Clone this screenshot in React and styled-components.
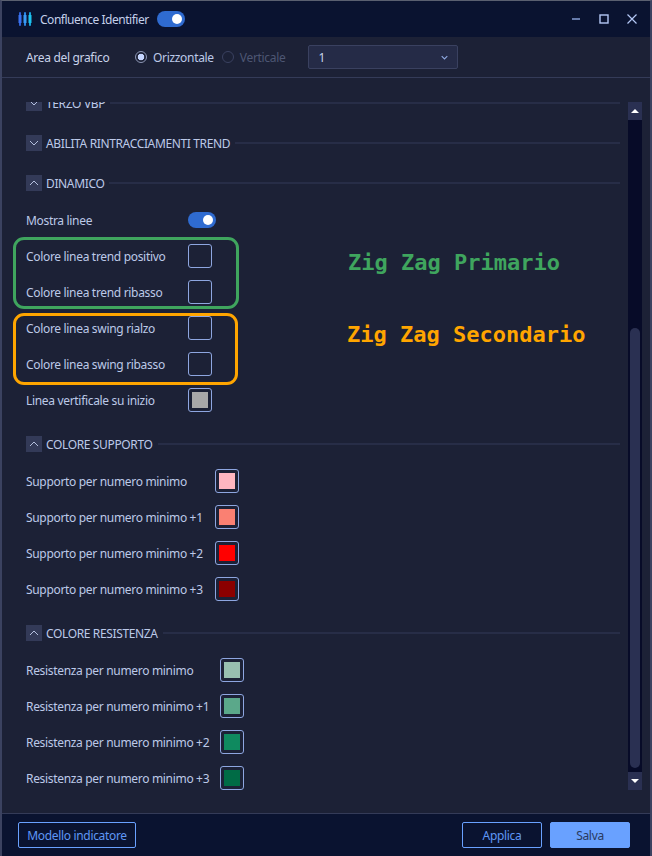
import styled, { createGlobalStyle } from "styled-components";

const GlobalStyle = createGlobalStyle`
  html, body {
    margin: 0;
    padding: 0;
    background: #1c2136;
  }
  *, *::before, *::after {
    box-sizing: border-box;
  }
`;

const Window = styled.div`
  width: 652px;
  height: 856px;
  display: flex;
  flex-direction: column;
  background: #1c2136;
  border-top: 1px solid #5a6070;
  border-left: 2px solid #3b4260;
  border-right: 2px solid #3b4260;
  font-family: "Noto Sans", "Open Sans", sans-serif;
  font-size: 12px;
  letter-spacing: -0.32px;
  color: #c9d3ea;
  overflow: hidden;
`;

const TitleBar = styled.div`
  height: 36px;
  flex: none;
  display: flex;
  align-items: center;
  background: #0a1330;
  padding: 0 12px 0 16px;
`;

const Title = styled.span`
  margin-left: 8px;
  margin-right: 8px;
  letter-spacing: -0.48px;
  color: #c4d0ea;
`;

const WindowControls = styled.div`
  margin-left: auto;
  display: flex;
  align-items: center;
  gap: 16px;
  color: #8fa8e0;
`;

const Toggle = styled.span`
  width: 28px;
  height: 16px;
  border-radius: 8px;
  background: #2f6bd0;
  display: flex;
  align-items: center;
  justify-content: flex-end;
  padding-right: 3px;

  &::after {
    content: "";
    width: 10px;
    height: 10px;
    border-radius: 50%;
    background: #fff;
  }
`;

const OptionsBar = styled.div`
  height: 41px;
  flex: none;
  display: flex;
  align-items: center;
  padding-left: 24px;
  background: #1c2136;
  border-bottom: 1px solid #343b58;
`;

const OptionLabel = styled.span`
  width: 109px;
`;

const Radio = styled.label`
  display: flex;
  align-items: center;
  gap: 6px;
  margin-right: 8px;
  color: ${(p) => (p.$disabled ? "#4d5673" : "#bcc9e8")};

  &::before {
    content: "";
    width: 12px;
    height: 12px;
    border-radius: 50%;
    border: 1px solid ${(p) => (p.$disabled ? "#3a4160" : "#8d97b5")};
    background: ${(p) =>
      p.$disabled
        ? "transparent"
        : "radial-gradient(circle, #c6d6ff 0 3px, transparent 3.6px)"};
  }
`;

const Select = styled.div`
  width: 150px;
  height: 24px;
  margin-left: 15px;
  display: flex;
  align-items: center;
  justify-content: space-between;
  padding: 0 9px;
  background: #252b47;
  border: 1px solid #3a4160;
  border-radius: 2px;
  color: #8fa8e0;

  span {
    color: #c9d3ea;
  }
`;

const Body = styled.div`
  flex: 1;
  min-height: 0;
  display: flex;
  padding: 24px 8px 23px 24px;
`;

/* the list is scrolled: the first heading is cut at the top edge */
const Content = styled.div`
  width: 594px;
  clip-path: inset(0 0 0 -24px);
`;

const Section = styled.div`
  margin-top: ${(p) => p.$top || 0}px;
`;

const Header = styled.div`
  height: 16px;
  display: flex;
  align-items: center;
  gap: 4px;
  margin-top: ${(p) => p.$top || 0}px;
  font-size: 12px;
  letter-spacing: -0.36px;
  color: #bcc9e8;

  &::after {
    content: "";
    flex: 1;
    height: 2px;
    margin-left: 1px;
    background: #272d47;
  }
`;

const Chevron = styled.span`
  width: 16px;
  height: 16px;
  flex: none;
  display: flex;
  align-items: center;
  justify-content: center;
  background: #333a58;
  color: #b4c0de;
`;

const Rows = styled.div`
  margin-top: 11px;
  position: relative;
`;

const Row = styled.div`
  height: 36px;
  display: grid;
  grid-template-columns: ${(p) => p.$label}px auto;
  justify-content: start;
  align-items: center;
  color: #bcc9e8;
`;

const Swatch = styled.span`
  width: 24px;
  height: 24px;
  display: flex;
  align-items: center;
  justify-content: center;
  background: transparent;
  border: 1px solid #8ea6e0;
  border-radius: 3px;

  &::after {
    content: "";
    width: 16px;
    height: 16px;
    background: ${(p) => p.$color || "transparent"};
  }
`;

const Marked = styled.div`
  position: relative;

  &::before {
    content: "";
    position: absolute;
    left: -13px;
    width: ${(p) => p.$width}px;
    top: ${(p) => p.$shift}px;
    bottom: ${(p) => -p.$shift}px;
    border: 3px solid ${(p) => p.$color};
    border-radius: 11px;
    pointer-events: none;
  }
`;

const Note = styled.span`
  position: absolute;
  left: ${(p) => p.$left}px;
  top: 12px;
  font-family: "DejaVu Sans Mono", "Liberation Mono", monospace;
  font-weight: 700;
  font-size: 22px;
  letter-spacing: 0;
  line-height: 26px;
  white-space: nowrap;
  color: ${(p) => p.$color};
`;

const ScrollBar = styled.div`
  width: 14px;
  margin-left: 8px;
  flex: none;
  display: flex;
  flex-direction: column;
  background: #070b28;
`;

const ScrollButton = styled.div`
  height: 18px;
  flex: none;
  display: flex;
  align-items: center;
  justify-content: center;
  background: #2a3052;
`;

const ScrollTrack = styled.div`
  flex: 1;
  display: flex;
  flex-direction: column;
  justify-content: flex-end;
  padding: 0 2px 4px;
`;

const ScrollThumb = styled.div`
  height: 440px;
  border-radius: 5px;
  background: #2a3052;
`;

const Footer = styled.div`
  height: 43px;
  flex: none;
  display: flex;
  align-items: center;
  gap: 8px;
  padding: 0 20px 0 16px;
  background: #0a1330;
  border-top: 1px solid #343b58;
`;

const Button = styled.button`
  width: ${(p) => p.$width}px;
  height: 26px;
  padding: 0;
  font: inherit;
  letter-spacing: inherit;
  border-radius: 2px;
  border: 1px solid #69a1ff;
  background: ${(p) => (p.$primary ? "#69a1ff" : "transparent")};
  color: ${(p) => (p.$primary ? "#2a3a5e" : "#5f97f5")};
  margin-left: ${(p) => (p.$push ? "auto" : "0")};
`;

const AppIcon = () => (
  <svg width="14" height="14" viewBox="0 0 14 14">
    <rect x="1" y="0" width="2" height="14" rx="1" fill="#2f62d8" />
    <rect x="0.5" y="3" width="3" height="8" fill="#3a72f0" />
    <rect x="6" y="0" width="2" height="14" rx="1" fill="#2b84e0" />
    <rect x="5.5" y="3" width="3" height="8" fill="#3a9cf5" />
    <rect x="11" y="0" width="2" height="14" rx="1" fill="#18a6dc" />
    <rect x="10.5" y="3" width="3" height="8" fill="#1cc4ee" />
  </svg>
);

const ChevronIcon = ({ up, size = 10 }) => (
  <svg width={size} height={size} viewBox="0 0 10 10" fill="none">
    <path
      d={up ? "M1 7l4-4 4 4" : "M1 3l4 4 4-4"}
      stroke="currentColor"
      strokeWidth={size < 10 ? 1.6 : 1}
    />
  </svg>
);

const Triangle = ({ down }) => (
  <svg width="8" height="4" viewBox="0 0 8 4">
    <path d={down ? "M0 0h8L4 4z" : "M0 4h8L4 0z"} fill="#fff" />
  </svg>
);

const supporto = [
  ["Supporto per numero minimo", "#ffb6c1"],
  ["Supporto per numero minimo +1", "#fa8072"],
  ["Supporto per numero minimo +2", "#ff0000"],
  ["Supporto per numero minimo +3", "#8b0000"],
];

const resistenza = [
  ["Resistenza per numero minimo", "#98bfb0"],
  ["Resistenza per numero minimo +1", "#5ba88a"],
  ["Resistenza per numero minimo +2", "#0f8a5f"],
  ["Resistenza per numero minimo +3", "#006b45"],
];

function App() {
  return (
    <>
      <GlobalStyle />
      <Window>
        <TitleBar>
          <AppIcon />
          <Title>Confluence Identifier</Title>
          <Toggle />
          <WindowControls>
            <svg width="12" height="12" viewBox="0 0 12 12" fill="none">
              <path d="M2 6h8" stroke="currentColor" strokeWidth="1.4" />
            </svg>
            <svg width="12" height="12" viewBox="0 0 12 12" fill="none">
              <rect x="2" y="2" width="8" height="8" stroke="#b4c8f5" strokeWidth="1.4" />
            </svg>
            <svg width="12" height="12" viewBox="0 0 12 12" fill="none">
              <path d="M1.5 1.5l9 9M10.5 1.5l-9 9" stroke="#b4c8f5" strokeWidth="1.2" />
            </svg>
          </WindowControls>
        </TitleBar>

        <OptionsBar>
          <OptionLabel>Area del grafico</OptionLabel>
          <Radio>Orizzontale</Radio>
          <Radio $disabled>Verticale</Radio>
          <Select>
            <span>1</span>
            <ChevronIcon size={7} />
          </Select>
        </OptionsBar>

        <Body>
          <Content>
            <Header $top={-7}>
              <Chevron>
                <ChevronIcon />
              </Chevron>
              TERZO VBP
            </Header>
            <Header $top={24}>
              <Chevron>
                <ChevronIcon />
              </Chevron>
              ABILITA RINTRACCIAMENTI TREND
            </Header>

            <Section $top={24}>
              <Header>
                <Chevron>
                  <ChevronIcon up />
                </Chevron>
                DINAMICO
              </Header>
              <Rows>
                <Row $label={162}>
                  Mostra linee
                  <Toggle />
                </Row>
                <Marked $color="#3fa55e" $shift={-1} $width={226}>
                  <Row $label={162}>
                    Colore linea trend positivo
                    <Swatch />
                  </Row>
                  <Row $label={162}>
                    Colore linea trend ribasso
                    <Swatch />
                  </Row>
                  <Note $color="#3fa55e" $left={322}>Zig Zag Primario</Note>
                </Marked>
                <Marked $color="#ffa500" $shift={3} $width={225}>
                  <Row $label={162}>
                    Colore linea swing rialzo
                    <Swatch />
                  </Row>
                  <Row $label={162}>
                    Colore linea swing ribasso
                    <Swatch />
                  </Row>
                  <Note $color="#ffa500" $left={321}>Zig Zag Secondario</Note>
                </Marked>
                <Row $label={162}>
                  Linea vertificale su inizio
                  <Swatch $color="#a9a9a9" />
                </Row>
              </Rows>
            </Section>

            <Section $top={18}>
              <Header>
                <Chevron>
                  <ChevronIcon up />
                </Chevron>
                COLORE SUPPORTO
              </Header>
              <Rows>
                {supporto.map(([label, color]) => (
                  <Row key={label} $label={189}>
                    {label}
                    <Swatch $color={color} />
                  </Row>
                ))}
              </Rows>
            </Section>

            <Section $top={18}>
              <Header>
                <Chevron>
                  <ChevronIcon up />
                </Chevron>
                COLORE RESISTENZA
              </Header>
              <Rows>
                {resistenza.map(([label, color]) => (
                  <Row key={label} $label={194}>
                    {label}
                    <Swatch $color={color} />
                  </Row>
                ))}
              </Rows>
            </Section>
          </Content>

          <ScrollBar>
            <ScrollButton>
              <Triangle />
            </ScrollButton>
            <ScrollTrack>
              <ScrollThumb />
            </ScrollTrack>
            <ScrollButton>
              <Triangle down />
            </ScrollButton>
          </ScrollBar>
        </Body>

        <Footer>
          <Button $width={118}>Modello indicatore</Button>
          <Button $width={80} $push>
            Applica
          </Button>
          <Button $width={80} $primary>
            Salva
          </Button>
        </Footer>
      </Window>
    </>
  );
}

export default App;
